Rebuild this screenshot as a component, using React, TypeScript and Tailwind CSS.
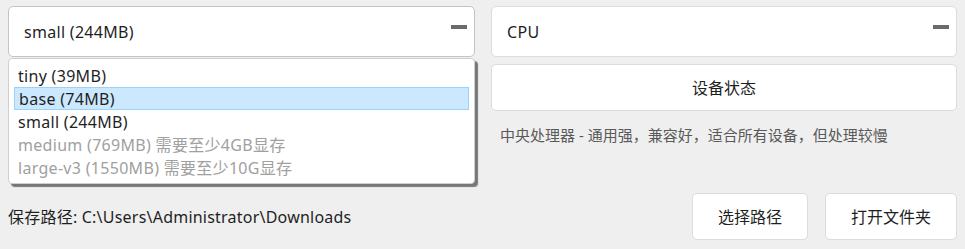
import React from "react";

const font = { fontFamily: '"Noto Sans", "Noto Sans CJK SC", sans-serif' };

function Dash() {
  return <div className="absolute right-[7px] top-[18px] h-[4px] w-[16px] bg-[#6b6b6b]" />;
}

const items: { label: string; disabled?: boolean; active?: boolean }[] = [
  { label: "tiny (39MB)" },
  { label: "base (74MB)", active: true },
  { label: "small (244MB)" },
  { label: "medium (769MB) 需要至少4GB显存", disabled: true },
  { label: "large-v3 (1550MB) 需要至少10G显存", disabled: true },
];

export default function App() {
  return (
    <div
      className="h-[249px] w-[965px] overflow-hidden bg-[#efefef] px-[8px] pt-[6px] text-[#1f1f1f]"
      style={font}
    >
      <div className="grid grid-cols-[467px_466px] gap-x-[16px]">
        <div className="relative">
          <div className="relative flex h-[51px] items-center rounded-[5px] border border-[#c4c4c4] bg-white pl-[15px] text-[16px] tracking-[0.3px]">
            small (244MB)
            <Dash />
          </div>
          <div className="absolute left-0 top-[52px] z-10 w-[467px] rounded-[4px] border border-[#cfcfcf] bg-white px-[5px] pb-[4px] pt-[5px] shadow-[3px_3px_1px_rgba(0,0,0,0.5)]">
            {items.map((it) => (
              <div
                key={it.label}
                className={
                  "flex h-[23px] items-center whitespace-nowrap pl-[4px] text-[16px] tracking-[0.3px] " +
                  (it.active
                    ? "border border-[#99d1ff] bg-[#cce8ff] pl-[3px] text-[#1f1f1f]"
                    : it.disabled
                    ? "text-[#a0a0a0]"
                    : "text-[#1f1f1f]")
                }
              >
                {it.label}
              </div>
            ))}
          </div>
        </div>
        <div className="flex flex-col">
          <div className="relative flex h-[51px] items-center rounded-[5px] border border-[#dcdcdc] bg-white pl-[15px] text-[16px] tracking-[0.3px]">
            CPU
            <Dash />
          </div>
          <button className="mt-[7px] flex h-[47px] items-center justify-center rounded-[5px] border border-[#dcdcdc] bg-white text-[16px]">
            设备状态
          </button>
          <div className="mt-[14px] pl-[9px] text-[15px] leading-[20px] text-[#5a5a5a]">
            中央处理器 - 通用强，兼容好，适合所有设备，但处理较慢
          </div>
        </div>
      </div>
      <div className="mt-[48px] flex items-center justify-between">
        <div className="text-[16px] tracking-[0.22px]">保存路径: C:\Users\Administrator\Downloads</div>
        <div className="flex gap-[17px]">
          <button className="flex h-[47px] w-[116px] items-center justify-center rounded-[5px] border border-[#dcdcdc] bg-white text-[16px]">
            选择路径
          </button>
          <button className="flex h-[47px] w-[132px] items-center justify-center rounded-[5px] border border-[#dcdcdc] bg-white text-[16px]">
            打开文件夹
          </button>
        </div>
      </div>
    </div>
  );
}
